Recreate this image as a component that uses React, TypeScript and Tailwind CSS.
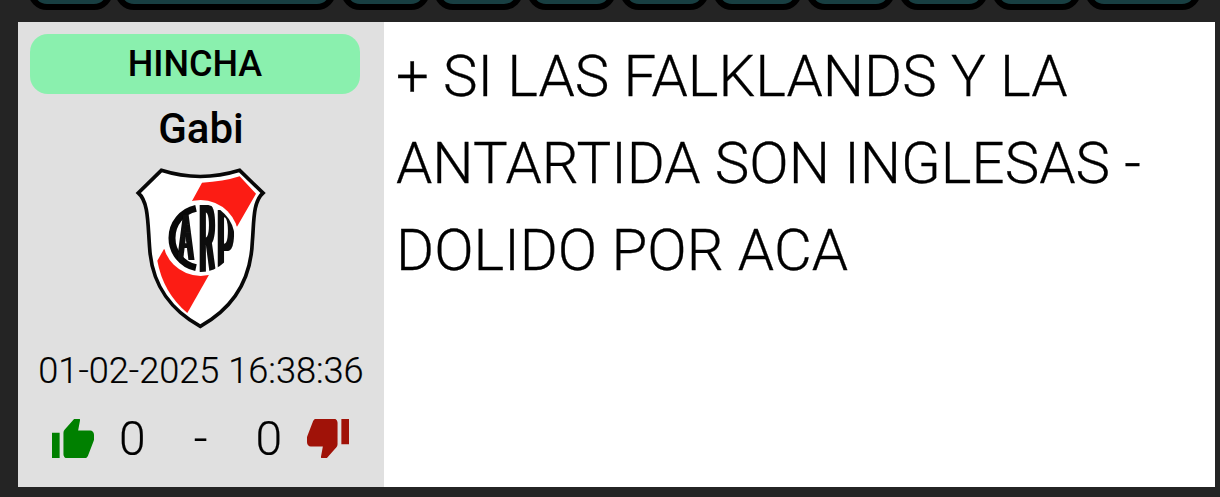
const buttons = [
  "ml-[28px] w-[85px]",
  "ml-[2px] w-[221px]",
  "ml-[5px] w-[89px]",
  "ml-[4px] w-[89px]",
  "ml-[4px] w-[89px]",
  "ml-[4px] w-[89px]",
  "ml-[4px] w-[89px]",
  "ml-[4px] w-[89px]",
  "ml-[4px] w-[89px]",
  "ml-[4px] w-[89px]",
  "ml-[4px] w-[116px]",
];

function Crest() {
  return (
    <svg viewBox="0 0 480 525" className="mr-[3px] h-[175px] w-[160px]" aria-label="CARP">
      <defs>
        <clipPath id="disc"><circle cx="242" cy="234" r="102" /></clipPath>
        {/* Widens only the vertical stems of the monogram. */}
        <filter id="stems" filterUnits="userSpaceOnUse" x="120" y="110" width="250" height="250">
          <feMorphology operator="dilate" radius="6 0.1" />
        </filter>
      </defs>
      <path d="M124 31Q240 68 359 31L429 99C398 125 402 190 397 245C392 380 320 455 241 499C160 455 96 380 89 265C83 190 86 125 55 99Z" fill="#fff" stroke="#080808" strokeWidth="11" />
      <path d="M246 68Q310 65 359 49L408 101L351 200L216 123Z" fill="#fc1c14" />
      <path d="M132 267L112 302Q129 397 202 459L268 343Z" fill="#fc1c14" />
      <circle cx="242" cy="234" r="114" fill="#fff" />
      <path d="M228 145A91 91 0 0 0 228 323" fill="none" stroke="#080808" strokeWidth="21" />
      <g clipPath="url(#disc)">
        <g filter="url(#stems)" className="font-['Roboto'] font-normal" fill="#080808">
          <text transform="translate(176 300) scale(.34 1)" fontSize="190">A</text>
          <text transform="translate(239 335) scale(.25 1)" fontSize="284">R</text>
          <text transform="translate(293 350) scale(.26 1)" fontSize="281">P</text>
        </g>
      </g>
    </svg>
  );
}

function Thumb({ className }: { className: string }) {
  return (
    <svg viewBox="1 2.6 22 18.2" preserveAspectRatio="none" className={className} fill="currentColor">
      <path d="M1 21h4V9H1v12zm22-11c0-1.1-.9-2-2-2h-6.31l.95-4.57.03-.32c0-.41-.17-.79-.44-1.06L14.17 1 7.59 7.59C7.22 7.95 7 8.45 7 9v10c0 1.1.9 2 2 2h9c.83 0 1.54-.5 1.84-1.22l3.02-7.05c.09-.23.14-.47.14-.73v-2z" />
    </svg>
  );
}

export default function App() {
  return (
    <div className="flex h-[497px] w-[1220px] flex-col overflow-hidden bg-[#242424] font-['Roboto',sans-serif] font-light text-black">
      <div className="flex h-[22px] shrink-0 items-start overflow-hidden">
        {buttons.map((size, i) => (
          <div key={i} className={`flex h-[10px] shrink-0 flex-col justify-end overflow-hidden ${size}`}>
            <div className="h-[60px] shrink-0 rounded-[19px] border-[6px] border-black bg-[#183f42]" />
          </div>
        ))}
      </div>
      <article className="ml-[18px] flex h-[465px] w-[1197px] bg-white">
        <aside className="flex w-[366px] flex-col items-center bg-[#e0e0e0] pt-3">
          <div className="mr-3 flex h-[60px] w-[330px] items-center justify-center rounded-[18px] bg-[#8af0ae] text-[36px] font-medium">HINCHA</div>
          <div className="h-[66px] text-[42px] leading-[69px] font-medium">Gabi</div>
          <Crest />
          <time className="h-[73px] text-[36.15px] leading-[72px] whitespace-nowrap [-webkit-text-stroke:0.2px_#000]">01-02-2025 16:38:36</time>
          <div className="flex h-[60px] w-[298px] items-center text-[48px] [-webkit-text-stroke:0.2px_#000]">
            <Thumb className="h-[39px] w-[42px] text-[#008000]" />
            <span className="mt-[2px] ml-[25px]">0</span>
            <span className="mt-[2px] ml-12">-</span>
            <span className="mt-[2px] ml-12">0</span>
            <Thumb className="ml-[25px] h-[39px] w-[42px] rotate-180 text-[#a01208]" />
          </div>
        </aside>
        <p className="flex-1 pt-[11px] pl-3 text-[58.2px] leading-[87px] [-webkit-text-stroke:0.3px_#000]">
          + SI LAS FALKLANDS Y LA<br />ANTARTIDA SON INGLESAS -<br />DOLIDO POR ACA
        </p>
      </article>
    </div>
  );
}
